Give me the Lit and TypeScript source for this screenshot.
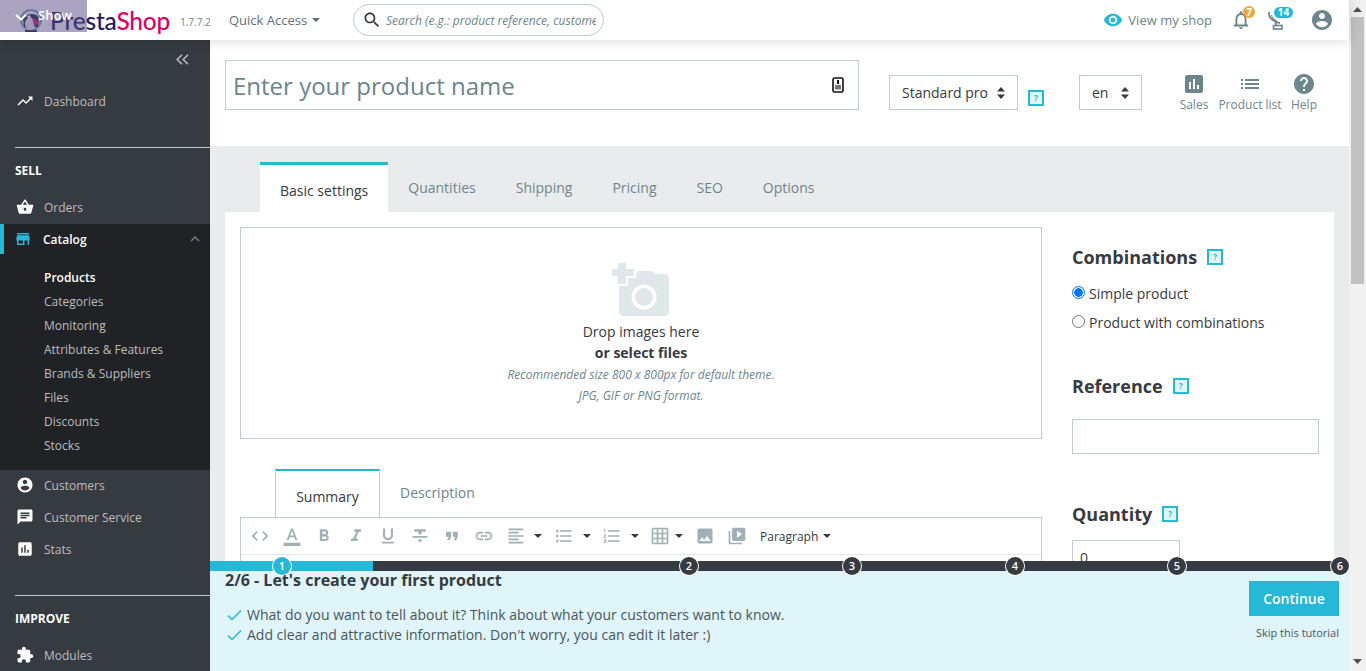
import { LitElement, html, css, svg } from 'lit';
import { customElement } from 'lit/decorators.js';

const ICONS: Record<string, string> = {
  trending: 'M16 6l2.29 2.29-4.88 4.88-4-4L2 16.59 3.41 18l6-6 4 4 6.3-6.29L22 12V6z',
  basket: 'M17.21 9l-4.38-6.56c-.19-.28-.51-.42-.83-.42-.32 0-.64.14-.83.43L6.79 9H2c-.55 0-1 .45-1 1 0 .09.01.18.04.27l2.54 9.27c.23.84 1 1.46 1.92 1.46h13c.92 0 1.69-.62 1.93-1.46l2.54-9.27L23 10c0-.55-.45-1-1-1h-4.79zM9 9l3-4.4L15 9H9zm3 8c-1.1 0-2-.9-2-2s.9-2 2-2 2 .9 2 2-.9 2-2 2z',
  store: 'M20 4H4v2h16V4zm1 10v-2l-1-5H4l-1 5v2h1v6h10v-6h4v6h2v-6h1zm-9 4H6v-4h6v4z',
  account: 'M12 2C6.48 2 2 6.48 2 12s4.48 10 10 10 10-4.48 10-10S17.52 2 12 2zm0 3c1.66 0 3 1.34 3 3s-1.34 3-3 3-3-1.34-3-3 1.34-3 3-3zm0 14.2c-2.5 0-4.71-1.28-6-3.22.03-1.99 4-3.08 6-3.08 1.99 0 5.97 1.09 6 3.08-1.29 1.94-3.5 3.22-6 3.22z',
  chat: 'M20 2H4c-1.1 0-1.99.9-1.99 2L2 22l4-4h14c1.1 0 2-.9 2-2V4c0-1.1-.9-2-2-2zM6 9h12v2H6V9zm8 5H6v-2h8v2zm4-6H6V6h12v2z',
  stats: 'M19 3H5c-1.1 0-2 .9-2 2v14c0 1.1.9 2 2 2h14c1.1 0 2-.9 2-2V5c0-1.1-.9-2-2-2zM9 17H7v-7h2v7zm4 0h-2V7h2v10zm4 0h-2v-4h2v4z',
  puzzle: 'M20.5 11H19V7c0-1.1-.9-2-2-2h-4V3.5C13 2.12 11.88 1 10.5 1S8 2.12 8 3.5V5H4c-1.1 0-1.99.9-1.99 2v3.8H3.5c1.49 0 2.7 1.21 2.7 2.7s-1.21 2.7-2.7 2.7H2V20c0 1.1.9 2 2 2h3.8v-1.5c0-1.49 1.21-2.7 2.7-2.7 1.49 0 2.7 1.21 2.7 2.7V22H17c1.1 0 2-.9 2-2v-4h1.5c1.38 0 2.5-1.12 2.5-2.5S21.88 11 20.5 11z',
  eye: 'M12 4.5C7 4.5 2.73 7.61 1 12c1.73 4.39 6 7.5 11 7.5s9.27-3.11 11-7.5c-1.73-4.39-6-7.5-11-7.5zM12 17c-2.76 0-5-2.24-5-5s2.24-5 5-5 5 2.24 5 5-2.24 5-5 5zm0-8c-1.66 0-3 1.34-3 3s1.34 3 3 3 3-1.34 3-3-1.34-3-3-3z',
  bell: 'M12 22c1.1 0 2-.9 2-2h-4c0 1.1.89 2 2 2zm6-6v-5c0-3.07-1.64-5.64-4.5-6.32V4c0-.83-.67-1.5-1.5-1.5s-1.5.67-1.5 1.5v.68C7.63 5.36 6 7.92 6 11v5l-2 2v1h16v-1l-2-2zm-2 1H8v-6c0-2.48 1.51-4.5 4-4.5s4 2.02 4 4.5v6z',
  help: 'M12 2C6.48 2 2 6.48 2 12s4.48 10 10 10 10-4.48 10-10S17.52 2 12 2zm1 17h-2v-2h2v2zm2.07-7.75l-.9.92C13.45 12.9 13 13.5 13 15h-2v-.5c0-1.1.45-2.1 1.17-2.83l1.24-1.26c.37-.36.59-.86.59-1.41 0-1.1-.9-2-2-2s-2 .9-2 2H8c0-2.21 1.79-4 4-4s4 1.79 4 4c0 .88-.36 1.68-.93 2.25z',
  list: 'M3 13h2v-2H3v2zm0 4h2v-2H3v2zm0-8h2V7H3v2zm4 4h14v-2H7v2zm0 4h14v-2H7v2zM7 7v2h14V7H7z',
  search: 'M15.5 14h-.79l-.28-.27C15.41 12.59 16 11.11 16 9.5 16 5.91 13.09 3 9.5 3S3 5.91 3 9.5 5.91 16 9.5 16c1.61 0 3.09-.59 4.23-1.57l.27.28v.79l5 4.99L20.49 19l-4.99-5zm-6 0C7.01 14 5 11.99 5 9.5S7.01 5 9.5 5 14 7.01 14 9.5 11.99 14 9.5 14z',
  code: 'M9.4 16.6L4.8 12l4.6-4.6L8 6l-6 6 6 6 1.4-1.4zm5.2 0l4.6-4.6-4.6-4.6L16 6l6 6-6 6-1.4-1.4z',
  color: 'M2 20h20v4H2v-4zm3.49-3h2.42l1.27-3.58h5.65L16.09 17h2.42L13.25 3h-2.5L5.49 17zm4.42-5.61l2.03-5.79h.12l2.03 5.79H9.91z',
  bold: 'M15.6 10.79c.97-.67 1.65-1.77 1.65-2.79 0-2.26-1.75-4-4-4H7v14h7.04c2.09 0 3.71-1.7 3.71-3.79 0-1.52-.86-2.82-2.15-3.42zM10 6.5h3c.83 0 1.5.67 1.5 1.5s-.67 1.5-1.5 1.5h-3v-3zm3.5 9H10v-3h3.5c.83 0 1.5.67 1.5 1.5s-.67 1.5-1.5 1.5z',
  italic: 'M10 4v3h2.21l-3.42 8H6v3h8v-3h-2.21l3.42-8H18V4z',
  underline: 'M12 17c3.31 0 6-2.69 6-6V3h-2.5v8c0 1.93-1.57 3.5-3.5 3.5S8.5 12.93 8.5 11V3H6v8c0 3.31 2.69 6 6 6zm-7 2v2h14v-2H5z',
  strike: 'M10 19h4v-3h-4v3zM5 4v3h5v3h4V7h5V4H5zM3 14h18v-2H3v2z',
  quote: 'M6 17h3l2-4V7H5v6h3zm8 0h3l2-4V7h-6v6h3z',
  link: 'M3.9 12c0-1.71 1.39-3.1 3.1-3.1h4V7H7c-2.76 0-5 2.24-5 5s2.24 5 5 5h4v-1.9H7c-1.71 0-3.1-1.39-3.1-3.1zM8 13h8v-2H8v2zm9-6h-4v1.9h4c1.71 0 3.1 1.39 3.1 3.1s-1.39 3.1-3.1 3.1h-4V17h4c2.76 0 5-2.24 5-5s-2.24-5-5-5z',
  align: 'M15 15H3v2h12v-2zm0-8H3v2h12V7zM3 13h18v-2H3v2zm0 8h18v-2H3v2zM3 3v2h18V3H3z',
  bullets: 'M4 10.5c-.83 0-1.5.67-1.5 1.5s.67 1.5 1.5 1.5 1.5-.67 1.5-1.5-.67-1.5-1.5-1.5zm0-6c-.83 0-1.5.67-1.5 1.5S3.17 7.5 4 7.5 5.5 6.83 5.5 6 4.83 4.5 4 4.5zm0 12c-.83 0-1.5.68-1.5 1.5s.68 1.5 1.5 1.5 1.5-.68 1.5-1.5-.67-1.5-1.5-1.5zM7 19h14v-2H7v2zm0-6h14v-2H7v2zm0-8v2h14V5H7z',
  numbers: 'M2 17h2v.5H3v1h1v.5H2v1h3v-4H2v1zm1-9h1V4H2v1h1v3zm-1 3h1.8L2 13.1v.9h3v-1H3.2L5 10.9V10H2v1zm5-6v2h14V5H7zm0 14h14v-2H7v2zm0-6h14v-2H7v2z',
  grid: 'M20 2H4c-1.1 0-2 .9-2 2v16c0 1.1.9 2 2 2h16c1.1 0 2-.9 2-2V4c0-1.1-.9-2-2-2zM8 20H4v-4h4v4zm0-6H4v-4h4v4zm0-6H4V4h4v4zm6 12h-4v-4h4v4zm0-6h-4v-4h4v4zm0-6h-4V4h4v4zm6 12h-4v-4h4v4zm0-6h-4v-4h4v4zm0-6h-4V4h4v4z',
  image: 'M21 19V5c0-1.1-.9-2-2-2H5c-1.1 0-2 .9-2 2v14c0 1.1.9 2 2 2h14c1.1 0 2-.9 2-2zM8.5 13.5l2.5 3.01L14.5 12l4.5 6H5l3.5-4.5z',
  video: 'M4 6H2v14c0 1.1.9 2 2 2h14v-2H4V6zm16-4H8c-1.1 0-2 .9-2 2v12c0 1.1.9 2 2 2h12c1.1 0 2-.9 2-2V4c0-1.1-.9-2-2-2zm-8 12.5v-9l6 4.5-6 4.5z',
  chevronUp: 'M7.41 15.41L12 10.83l4.59 4.58L18 14l-6-6-6 6z',
};

const icon = (name: string, size: number, color: string) => html`<svg
  class="icon"
  width=${size}
  height=${size}
  viewBox="0 0 24 24"
  fill=${color}
>
  ${svg`<path d=${ICONS[name]}></path>`}
</svg>`;

const updown = html`<svg class="updown" width="8" height="12" viewBox="0 0 8 12" fill="#363a41">
  <path d="M4 0l4 4.6H0zM4 12L0 7.4h8z"></path>
</svg>`;

const caret = (color = '#6c868e') => html`<svg class="caret" width="8" height="4" viewBox="0 0 8 4" fill=${color}>
  <path d="M0 0h8L4 4z"></path>
</svg>`;

const helpBox = html`<span class="help-box">?</span>`;

const SUBMENU = ['Products', 'Categories', 'Monitoring', 'Attributes & Features', 'Brands & Suppliers', 'Files', 'Discounts', 'Stocks'];
const PRODUCT_TABS = ['Basic settings', 'Quantities', 'Shipping', 'Pricing', 'SEO', 'Options'];
const STEPS = [72, 479, 642, 805, 967, 1130];

const TOOLBAR: { name: string; width: number; gap?: number }[] = [
  { name: 'code', width: 32 },
  { name: 'color', width: 32 },
  { name: 'bold', width: 32 },
  { name: 'italic', width: 32 },
  { name: 'underline', width: 32 },
  { name: 'strike', width: 32 },
  { name: 'quote', width: 32 },
  { name: 'link', width: 32 },
  { name: 'align', width: 48, gap: 8 },
  { name: 'bullets', width: 48, gap: 9 },
  { name: 'numbers', width: 48, gap: 9 },
  { name: 'grid', width: 45, gap: 5 },
  { name: 'image', width: 32 },
  { name: 'video', width: 33 },
];

@customElement('app-root')
export class AppRoot extends LitElement {
  static styles = css`
    :host {
      display: block;
      position: relative;
      width: 1366px;
      height: 671px;
      overflow: hidden;
      font-family: 'Open Sans', 'Noto Sans', sans-serif;
      color: #363a41;
      background: #eaebec;
    }
    .icon, .updown, .caret { display: block; flex: none; }
    .page { display: flex; height: 671px; }
    .app { flex: 1; min-width: 0; display: flex; flex-direction: column; }

    /* top bar */
    .topbar {
      position: relative;
      z-index: 2;
      flex: none;
      height: 40px;
      background: #fff;
      box-shadow: 0 0 12px rgba(0, 0, 0, 0.18);
      display: flex;
      align-items: center;
      font-size: 13px;
      color: #6c868e;
    }
    .show-tab {
      position: absolute;
      left: 0;
      top: 0;
      width: 87px;
      height: 32px;
      background: rgba(86, 74, 132, 0.5);
      color: #fff;
      font-size: 13px;
      font-weight: 600;
      line-height: 31px;
      padding-left: 38px;
      box-sizing: border-box;
    }
    .show-tab svg { position: absolute; left: 15px; top: 14px; }
    .logo { display: flex; align-items: center; margin-left: 20px; width: 160px; flex: none; }
    .logo-mark { flex: none; margin-right: 8px; }
    .logo-text { font-family: Lato, sans-serif; font-size: 24.5px; font-weight: 500; letter-spacing: -0.2px; color: #251b5b; line-height: 40px; margin-top: 1px; }
    .logo-text b { font-weight: 500; color: #df0067; }
    .version { font-size: 10px; width: 49px; flex: none; margin-top: 3px; }
    .quick { display: flex; align-items: center; gap: 5px; width: 124px; flex: none; color: #5d7178; }
    .search {
      flex: none;
      width: 251px;
      height: 32px;
      box-sizing: border-box;
      border: 1px solid #bbcdd2;
      border-radius: 16px;
      display: flex;
      align-items: center;
      padding: 0 7px 0 8px;
      gap: 4px;
      font-size: 12px;
      font-style: italic;
      white-space: nowrap;
      overflow: hidden;
    }
    .search span { overflow: hidden; }
    .top-right { margin-left: auto; display: flex; align-items: center; }
    .view-shop { display: flex; align-items: center; gap: 5px; margin-right: 18px; }
    .notify { position: relative; width: 22px; height: 22px; }
    .badge {
      position: absolute;
      font-size: 10px;
      font-weight: 700;
      color: #fff;
      line-height: 11px;
      text-align: center;
      border-radius: 6px;
    }
    .badge.orange { background: #f0a63a; left: 13px; top: -3px; width: 12px; height: 12px; line-height: 12px; }
    .badge.blue { background: #25b9d7; left: 9px; top: -2px; width: 19px; height: 11px; }
    .notify.bell { margin-right: 13px; }
    .notify.dish { margin-right: 23px; }
    .avatar { margin-right: 15px; }

    /* body */
    .body { flex: 1; min-height: 0; display: flex; }
    .sidebar {
      flex: none;
      width: 210px;
      background: #363a41;
      color: #bebebe;
      font-size: 12px;
      overflow: hidden;
    }
    .collapse { height: 43px; display: flex; justify-content: flex-end; padding: 14px 21px 0 0; box-sizing: border-box; }
    .item { display: flex; align-items: center; height: 32px; padding-left: 16px; gap: 10px; }
    .item.first { margin-top: 2px; }
    .item.orders { margin-bottom: 1px; }
    .item.customers { margin-top: -1px; }
    .rule { height: 1px; background: #bbcdd2; margin-left: 15px; }
    .rule.sell { margin-top: 30px; }
    .rule.improve { margin-top: 30px; }
    .section { color: #fff; font-weight: 700; font-size: 12px; line-height: 16px; padding: 15px 0 0 15px; height: 43px; box-sizing: border-box; }
    .catalog { background: #202226; height: 246px; }
    .catalog-head { display: flex; align-items: center; height: 30px; border-left: 4px solid #25b9d7; padding: 0 6px 0 10px; gap: 11px; color: #fff; font-weight: 600; }
    .catalog-head .chev { margin-left: auto; }
    .sub { padding: 12px 0 0 44px; }
    .sub div { height: 24px; line-height: 24px; }
    .sub .active { color: #fff; font-weight: 600; }

    /* main */
    .main { flex: 1; min-width: 0; overflow: hidden; display: flex; flex-direction: column; }
    .head { flex: none; height: 106px; background: #fff; box-sizing: border-box; padding: 20px 15px 0; display: flex; align-items: flex-start; }
    .name-input {
      flex: none;
      width: 634px;
      height: 50px;
      box-sizing: border-box;
      border: 1px solid #bbcdd2;
      display: flex;
      align-items: center;
      justify-content: space-between;
      padding: 0 14px 0 7px;
      font-size: 24px;
      color: #6c868e;
    }
    .select {
      flex: none;
      box-sizing: border-box;
      height: 35px;
      margin-top: 15px;
      border: 1px solid #bbcdd2;
      display: flex;
      align-items: center;
      justify-content: space-between;
      font-size: 14px;
      color: #363a41;
    }
    .select.type { width: 129px; margin-left: 30px; padding: 0 12px; }
    .select.lang { width: 63px; margin-left: 35px; padding: 0 12px; }
    .help-box {
      display: inline-block;
      flex: none;
      box-sizing: border-box;
      width: 16px;
      height: 16px;
      border: 2px solid #25b9d7;
      background: #dff5f9;
      color: #25b9d7;
      font-size: 8px;
      font-weight: 700;
      line-height: 12px;
      text-align: center;
    }
    .head > .help-box { margin: 30px 0 0 10px; }
    .tools { display: flex; margin-left: 37px; color: #6c868e; font-size: 12px; }
    .tool { display: flex; flex-direction: column; align-items: center; margin-top: 12px; line-height: 16px; margin-right: 9px; }
    .tool svg { margin-bottom: 1px; }
    .tool.sales { width: 30px; }
    .tool.plist { width: 64px; }
    .tool.help { width: 30px; margin-right: 0; margin-left: -2px; }

    .content { flex: 1; min-height: 0; padding: 16px 15px 0; display: flex; flex-direction: column; }
    .tabs { flex: none; display: flex; height: 50px; padding-left: 35px; font-size: 14px; color: #6c868e; }
    .tabs div { padding: 0 20px; line-height: 52px; }
    .tabs .on { background: #fff; color: #363a41; border-top: 3px solid #25b9d7; }
    .card { flex: 1; min-height: 0; background: #fff; padding: 15px; display: flex; gap: 30px; overflow: hidden; }
    .left { flex: none; width: 802px; }
    .dropzone {
      box-sizing: border-box;
      height: 212px;
      border: 1px solid #bbcdd2;
      display: flex;
      flex-direction: column;
      align-items: center;
      padding-top: 35px;
      font-size: 14px;
      line-height: 21px;
    }
    .dropzone svg { margin-bottom: 5px; }
    .dropzone strong { font-weight: 700; }
    .dropzone em { font-size: 12px; color: #6c868e; line-height: 21px; }
    .dropzone em.rec { margin-top: 1px; }
    .sub-tabs { display: flex; height: 48px; margin: 30px 0 0 35px; font-size: 14px; color: #6c868e; }
    .sub-tabs .on {
      box-sizing: border-box;
      width: 105px;
      text-align: center;
      background: #fff;
      color: #363a41;
      border: 1px solid #bbcdd2;
      border-top: 2px solid #25b9d7;
      border-bottom: 0;
      line-height: 52px;
    }
    .sub-tabs .off { padding-left: 20px; line-height: 48px; }
    .editor { border: 1px solid #bbcdd2; height: 120px; box-sizing: border-box; }
    .toolbar { height: 36px; border-bottom: 1px solid #e4e8ea; display: flex; align-items: center; padding-left: 9px; color: #6c868e; }
    .tb { display: flex; align-items: center; flex: none; }
    .tb.para { gap: 5px; font-size: 12px; color: #363a41; }
    .right { flex: 1; min-width: 0; }
    .right h2 { margin: 0; font-size: 18px; font-weight: 700; line-height: 24px; display: flex; align-items: center; gap: 10px; }
    .right h2.combo { margin-top: 18px; }
    .radio { display: flex; align-items: center; gap: 4px; font-size: 14px; color: #363a41; height: 20px; }
    .radio i { box-sizing: border-box; flex: none; width: 13px; height: 13px; border-radius: 50%; border: 1px solid #767676; background: #fff; margin-top: -1px; }
    .radio i.sel { border-color: #0075ff; background: radial-gradient(circle, #0075ff 0 4px, #fff 4.6px); }
    .radio.a { margin-top: 14px; }
    .radio.b { margin-top: 9px; }
    .right h2.ref { margin-top: 42px; }
    .right h2.qty { margin-top: 48px; }
    .field { box-sizing: border-box; height: 35px; border: 1px solid #bbcdd2; margin-top: 21px; font-size: 14px; padding: 7px; line-height: 20px; }
    .field.small { width: 108px; margin-top: 14px; }

    /* tutorial overlay */
    .tutorial {
      position: absolute;
      left: 210px;
      top: 561px;
      width: 1139px;
      height: 110px;
      background: #dff5f9;
      z-index: 3;
    }
    .bar { position: relative; height: 10px; background: #363a41; }
    .bar .fill { height: 10px; width: 163px; background: #25b9d7; }
    .dot {
      position: absolute;
      top: -4px;
      width: 18px;
      height: 18px;
      margin-left: -9px;
      border-radius: 50%;
      background: #363a41;
      box-shadow: 0 0 0 1px #fff;
      color: #fff;
      font-size: 11px;
      font-weight: 600;
      line-height: 18px;
      text-align: center;
    }
    .dot.on { background: #25b9d7; }
    .tut-title { font-size: 16px; font-weight: 700; line-height: 20px; position: absolute; left: 15px; top: 9px; color: #363a41; }
    .tut-list { position: absolute; left: 17px; top: 44px; font-size: 14px; line-height: 20px; color: #4a5560; }
    .tut-list div { display: flex; align-items: center; gap: 5px; height: 20px; }
    .tut-actions { position: absolute; right: 10px; top: 20px; display: flex; flex-direction: column; align-items: flex-end; }
    .continue {
      width: 90px;
      height: 35px;
      background: #25b9d7;
      color: #fff;
      font-size: 14px;
      font-weight: 600;
      line-height: 35px;
      text-align: center;
    }
    .skip { font-size: 11px; color: #4a5560; margin-top: 9px; line-height: 16px; }

    /* scrollbar */
    .scrollbar { flex: none; width: 17px; background: #f1f1f1; position: relative; display: flex; flex-direction: column; align-items: center; }
    .scrollbar .up { margin-top: 7px; }
    .scrollbar .thumb { width: 13px; height: 267px; background: #c1c1c1; margin-top: 5px; }
    .scrollbar .down { margin-top: auto; margin-bottom: 7px; }
  `;

  private renderSidebar() {
    return html`<nav class="sidebar">
      <div class="collapse">
        <svg width="13" height="11" viewBox="0 0 13 11" fill="none" stroke="#bebebe" stroke-width="1.5">
          <path d="M6 .8L1.2 5.5 6 10.2M12 .8L7.2 5.5 12 10.2"></path>
        </svg>
      </div>
      <div class="item first">${icon('trending', 18, '#fff')}<span>Dashboard</span></div>
      <div class="rule sell"></div>
      <div class="section">SELL</div>
      <div class="item orders">${icon('basket', 18, '#fff')}<span>Orders</span></div>
      <div class="catalog">
        <div class="catalog-head">
          ${icon('store', 18, '#25b9d7')}<span>Catalog</span>
          <span class="chev">${icon('chevronUp', 18, '#6c868e')}</span>
        </div>
        <div class="sub">
          ${SUBMENU.map((s, i) => html`<div class=${i === 0 ? 'active' : ''}>${s}</div>`)}
        </div>
      </div>
      <div class="item customers">${icon('account', 18, '#fff')}<span>Customers</span></div>
      <div class="item">${icon('chat', 18, '#fff')}<span>Customer Service</span></div>
      <div class="item">${icon('stats', 18, '#fff')}<span>Stats</span></div>
      <div class="rule improve"></div>
      <div class="section">IMPROVE</div>
      <div class="item">${icon('puzzle', 18, '#fff')}<span>Modules</span></div>
    </nav>`;
  }

  private renderToolbar() {
    const c = '#9fb0b6';
    return html`<div class="toolbar">
      ${TOOLBAR.map(
        (t) => html`<span class="tb" style="width:${t.width}px;gap:${t.gap ?? 0}px">
          ${icon(t.name, 20, c)}${t.gap ? caret('#363a41') : ''}
        </span>`,
      )}
      <span class="tb para">Paragraph${caret('#363a41')}</span>
    </div>`;
  }

  render() {
    return html`<div class="page">
        <div class="app">
          <header class="topbar">
            <div class="logo">
              <svg class="logo-mark" width="22" height="25" viewBox="0 0 22 25">
                <circle cx="11" cy="12" r="10" fill="none" stroke="#7fa6bb" stroke-width="2"></circle>
                <path d="M3 11c2-6 14-7 16-1l-1 9H4z" fill="#2f2d45"></path>
                <ellipse cx="10" cy="16" rx="5" ry="6.5" fill="#f3eee8"></ellipse>
                <circle cx="9" cy="9" r="1.8" fill="#fff"></circle>
                <path d="M12 10l8 4-6 4z" fill="#d6226d"></path>
                <path d="M5 22h12v2H5z" fill="#2f2d45"></path>
              </svg>
              <span class="logo-text">Presta<b>Shop</b></span>
            </div>
            <span class="version">1.7.7.2</span>
            <span class="quick">Quick Access ${caret('#5d7178')}</span>
            <div class="search">
              ${icon('search', 20, '#363a41')}
              <span>Search (e.g.: product reference, customer name...)</span>
            </div>
            <div class="top-right">
              <span class="view-shop">${icon('eye', 20, '#25b9d7')}View my shop</span>
              <span class="notify bell">
                ${icon('bell', 22, '#6c868e')}<span class="badge orange">7</span>
              </span>
              <span class="notify dish">
                <svg width="22" height="22" viewBox="0 0 22 22" fill="none" stroke="#6c868e" stroke-width="1.8">
                  <path d="M4 3c-1 5 4 10 11 11"></path>
                  <path d="M6.5 6c.5 3 2.5 5 5.5 5.5" stroke-width="1.2"></path>
                  <path d="M10.5 13l.8 3.5"></path>
                  <rect x="8.5" y="16.5" width="8.5" height="3.5" stroke-width="1.6"></rect>
                </svg>
                <span class="badge blue">14</span>
              </span>
              <span class="avatar">${icon('account', 24, '#6c868e')}</span>
            </div>
            <div class="show-tab">
              <svg width="12" height="7" viewBox="0 0 12 7" fill="none" stroke="#fff" stroke-width="2"><path d="M1 1l5 4.5L11 1"></path></svg>
              Show
            </div>
          </header>
          <div class="body">
            ${this.renderSidebar()}
            <main class="main">
              <section class="head">
                <div class="name-input">
                  <span>Enter your product name</span>
                  <svg width="12" height="16" viewBox="0 0 12 16">
                    <rect x="1" y="1" width="10" height="14" rx="1.5" fill="#fff" stroke="#111" stroke-width="1.6"></rect>
                    <rect x="5" y="3" width="2" height="4" fill="#111"></rect>
                    <rect x="3" y="8" width="6" height="4.5" fill="#777"></rect>
                  </svg>
                </div>
                <div class="select type"><span>Standard pro</span>${updown}</div>
                ${helpBox}
                <div class="select lang"><span>en</span>${updown}</div>
                <div class="tools">
                  <div class="tool sales">${icon('stats', 24, '#6c868e')}<span>Sales</span></div>
                  <div class="tool plist">${icon('list', 24, '#6c868e')}<span>Product list</span></div>
                  <div class="tool help">${icon('help', 24, '#6c868e')}<span>Help</span></div>
                </div>
              </section>
              <section class="content">
                <div class="tabs">
                  ${PRODUCT_TABS.map((t, i) => html`<div class=${i === 0 ? 'on' : ''}>${t}</div>`)}
                </div>
                <div class="card">
                  <div class="left">
                    <div class="dropzone">
                      <svg width="58" height="53" viewBox="0 0 58 53">
                        <path d="M7 14h16l3-6h14l3 3h10c2 0 4 2 4 4v34c0 2-2 4-4 4H11c-2 0-4-2-4-4z" fill="#dfe7ea"></path>
                        <circle cx="32" cy="34" r="12.5" fill="#fff"></circle>
                        <circle cx="32" cy="34" r="9" fill="#dfe7ea"></circle>
                        <path d="M4 -2h12v6h8v11h-8v8H4v-8h-6V4h6z" fill="#fff"></path>
                        <path d="M6 0h8v6h8v7h-8v8H6v-8H0V6h6z" fill="#dfe7ea"></path>
                      </svg>
                      <span>Drop images here</span>
                      <strong>or select files</strong>
                      <em class="rec">Recommended size 800 x 800px for default theme.</em>
                      <em>JPG, GIF or PNG format.</em>
                    </div>
                    <div class="sub-tabs">
                      <div class="on">Summary</div>
                      <div class="off">Description</div>
                    </div>
                    <div class="editor">${this.renderToolbar()}</div>
                  </div>
                  <div class="right">
                    <h2 class="combo">Combinations ${helpBox}</h2>
                    <label class="radio a"><i class="sel"></i>Simple product</label>
                    <label class="radio b"><i></i>Product with combinations</label>
                    <h2 class="ref">Reference ${helpBox}</h2>
                    <div class="field"></div>
                    <h2 class="qty">Quantity ${helpBox}</h2>
                    <div class="field small">0</div>
                  </div>
                </div>
              </section>
            </main>
          </div>
        </div>
        <div class="scrollbar">
          <svg class="up" width="9" height="5" viewBox="0 0 9 5" fill="#505050"><path d="M4.5 0L9 5H0z"></path></svg>
          <div class="thumb"></div>
          <svg class="down" width="9" height="5" viewBox="0 0 9 5" fill="#505050"><path d="M0 0h9L4.5 5z"></path></svg>
        </div>
      </div>
      <aside class="tutorial">
        <div class="bar">
          <div class="fill"></div>
          ${STEPS.map((x, i) => html`<span class="dot ${i === 0 ? 'on' : ''}" style="left:${x}px">${i + 1}</span>`)}
        </div>
        <div class="tut-title">2/6 - Let's create your first product</div>
        <div class="tut-list">
          ${["What do you want to tell about it? Think about what your customers want to know.", "Add clear and attractive information. Don't worry, you can edit it later :)"].map(
            (t) => html`<div>
              <svg width="15" height="12" viewBox="0 0 15 12" fill="none" stroke="#25b9d7" stroke-width="1.5"><path d="M1 6.5l4 4L14 1.5"></path></svg>
              <span>${t}</span>
            </div>`,
          )}
        </div>
        <div class="tut-actions">
          <div class="continue">Continue</div>
          <div class="skip">Skip this tutorial</div>
        </div>
      </aside>`;
  }
}
